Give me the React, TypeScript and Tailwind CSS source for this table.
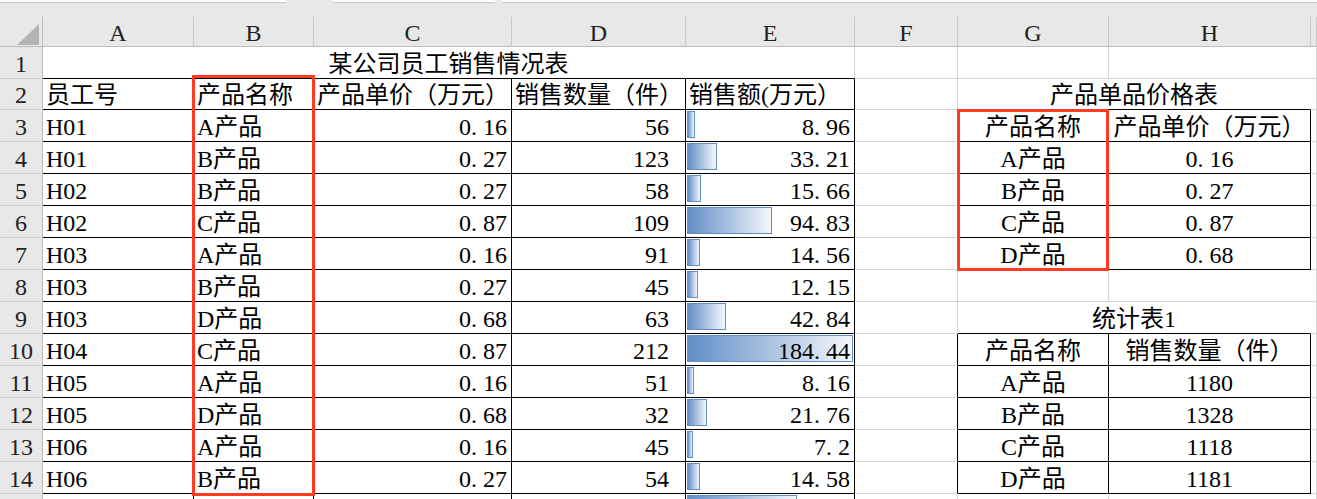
import type { ReactNode } from 'react'

type Edge = 'g' | 'k' | 'n'
type Align = 'l' | 'r' | 'c' | 'd'

const BR: Record<Edge, string> = {
  g: 'border-r-[#d4d4d4]',
  k: 'border-r-black',
  n: 'border-r-transparent',
}
const BB: Record<Edge, string> = {
  g: 'border-b-[#d4d4d4]',
  k: 'border-b-black',
  n: 'border-b-transparent',
}
const JUST: Record<Align, string> = {
  l: 'justify-start pl-[3px]',
  r: 'justify-end pr-[4px]',
  d: 'justify-end pr-[16px]',
  c: 'justify-center',
}

// column widths incl. the 1px right edge: A..H, then the sliver of I
const W = {
  A: 'w-[151px]',
  B: 'w-[120px]',
  C: 'w-[198px]',
  D: 'w-[174px]',
  E: 'w-[169px]',
  F: 'w-[103px]',
  G: 'w-[151px]',
  H: 'w-[202px]',
  GH: 'w-[353px]',
  AE: 'w-[812px]',
  I: 'w-[6px]',
}

const sales = [
  { id: 'H01', p: 'A产品', price: '0.16', qty: 56, total: '8.96' },
  { id: 'H01', p: 'B产品', price: '0.27', qty: 123, total: '33.21' },
  { id: 'H02', p: 'B产品', price: '0.27', qty: 58, total: '15.66' },
  { id: 'H02', p: 'C产品', price: '0.87', qty: 109, total: '94.83' },
  { id: 'H03', p: 'A产品', price: '0.16', qty: 91, total: '14.56' },
  { id: 'H03', p: 'B产品', price: '0.27', qty: 45, total: '12.15' },
  { id: 'H03', p: 'D产品', price: '0.68', qty: 63, total: '42.84' },
  { id: 'H04', p: 'C产品', price: '0.87', qty: 212, total: '184.44' },
  { id: 'H05', p: 'A产品', price: '0.16', qty: 51, total: '8.16' },
  { id: 'H05', p: 'D产品', price: '0.68', qty: 32, total: '21.76' },
  { id: 'H06', p: 'A产品', price: '0.16', qty: 45, total: '7.2' },
  { id: 'H06', p: 'B产品', price: '0.27', qty: 54, total: '14.58' },
]

// right hand side, keyed by sheet row
const side: Record<number, [string, ReactNode] | string> = {
  2: '产品单品价格表',
  3: ['产品名称', '产品单价（万元）'],
  4: ['A产品', <Num v="0.16" />],
  5: ['B产品', <Num v="0.27" />],
  6: ['C产品', <Num v="0.87" />],
  7: ['D产品', <Num v="0.68" />],
  9: '统计表1',
  10: ['产品名称', '销售数量（件）'],
  11: ['A产品', '1180'],
  12: ['B产品', '1328'],
  13: ['C产品', '1118'],
  14: ['D产品', '1181'],
}

const MAX = 184.44
const BAR_MAX = 166

function Num({ v }: { v: string }) {
  const [a, b] = v.split('.')
  return (
    <span>
      {a}
      {b !== undefined && (
        <>
          <span className="inline-block w-[12px]">.</span>
          {b}
        </>
      )}
    </span>
  )
}

function Cell({
  w,
  r = 'g',
  b = 'g',
  a = 'l',
  bar,
  children,
}: {
  w: string
  r?: Edge
  b?: Edge
  a?: Align
  bar?: number
  children?: ReactNode
}) {
  return (
    <div
      className={`relative flex shrink-0 items-end border-r border-b pb-[1px] leading-[26px] ${w} ${BR[r]} ${BB[b]} ${JUST[a]}`}
    >
      {bar !== undefined && (
        <div
          className="absolute left-[1px] top-[1px] h-[27px] border border-[#638ec6] bg-linear-to-r from-[#638ec6] to-[#f4f7fb]"
          style={{ width: Math.round((bar / MAX) * BAR_MAX) }}
        />
      )}
      <span className="relative whitespace-nowrap">{children}</span>
    </div>
  )
}

function RowHead({ n }: { n?: number }) {
  return (
    <div className="flex w-[43px] shrink-0 items-end justify-center border-r border-b border-r-[#bdbdbd] border-b-[#d0d0d0] bg-[#e8e8e8] pb-[1px] leading-[26px] text-[#222]">
      {n}
    </div>
  )
}

function Side({ row }: { row: number }) {
  const s = side[row]
  const inTable = Array.isArray(s)
  const f = <Cell w={W.F} r={inTable ? 'k' : 'g'} />
  if (typeof s === 'string') {
    return (
      <>
        {f}
        <Cell w={W.GH} r="n" b="k" a="c">
          {s}
        </Cell>
      </>
    )
  }
  if (Array.isArray(s)) {
    return (
      <>
        {f}
        <Cell w={W.G} r="k" b="k" a="c">
          {s[0]}
        </Cell>
        <Cell w={W.H} r="k" b="k" a="c">
          {s[1]}
        </Cell>
      </>
    )
  }
  return (
    <>
      {f}
      <Cell w={W.G} />
      <Cell w={W.H} r="n" />
    </>
  )
}

export default function App() {
  return (
    <div className="relative h-[499px] w-[1317px] overflow-hidden bg-white font-['Liberation_Serif','Noto_Sans_CJK_SC',serif] text-[24px] text-black">
      {/* formula bar remnant */}
      <div className="flex h-[17px] bg-[#e8e8e8]">
        <div className="h-[3px] w-[286px] border-b border-[#c8c8c8] bg-white" />
        <div className="w-[47px]" />
        <div className="h-[3px] w-[162px] border-b border-[#c8c8c8] bg-white" />
        <div className="w-[7px]" />
        <div className="h-[3px] flex-1 border-b border-[#c8c8c8] bg-white" />
      </div>

      {/* column letters */}
      <div className="flex h-[30px] bg-[#e8e8e8] text-[#222]">
        <div className="flex w-[43px] shrink-0 items-end justify-end border-r border-b border-[#bdbdbd] pr-[3px] pb-[1px]">
          <svg width="22" height="21" viewBox="0 0 22 21">
            <polygon points="22,0 22,21 0,21" fill="#b4b4b4" />
          </svg>
        </div>
        {(['A', 'B', 'C', 'D', 'E', 'F', 'G', 'H'] as const).map((c) => (
          <div
            key={c}
            className={`flex shrink-0 items-end justify-center border-r border-b border-r-[#c8c8c8] border-b-[#bdbdbd] leading-[26px] ${W[c]}`}
          >
            {c}
          </div>
        ))}
        <div className="w-[6px] shrink-0 border-r border-b border-r-[#c8c8c8] border-b-[#bdbdbd]" />
        <div className="flex-1 border-b border-[#bdbdbd]" />
      </div>

      {/* row 1 */}
      <div className="flex h-[32px]">
        <RowHead n={1} />
        <Cell w={W.AE} b="k" a="c">
          某公司员工销售情况表
        </Cell>
        <Side row={1} />
        <Cell w={W.I} />
      </div>

      {/* row 2 */}
      <div className="flex h-[31px]">
        <RowHead n={2} />
        <Cell w={W.A} r="k" b="k">
          员工号
        </Cell>
        <Cell w={W.B} r="k" b="k">
          产品名称
        </Cell>
        <Cell w={W.C} r="k" b="k">
          产品单价（万元）
        </Cell>
        <Cell w={W.D} r="k" b="k">
          销售数量（件）
        </Cell>
        <Cell w={W.E} r="k" b="k">
          销售额(万元）
        </Cell>
        <Side row={2} />
        <Cell w={W.I} />
      </div>

      {sales.map((s, i) => {
        const row = i + 3
        return (
          <div key={row} className="flex h-[32px]">
            <RowHead n={row} />
            <Cell w={W.A} r="k" b="k">
              {s.id}
            </Cell>
            <Cell w={W.B} r="k" b="k">
              {s.p}
            </Cell>
            <Cell w={W.C} r="k" b="k" a="r">
              <Num v={s.price} />
            </Cell>
            <Cell w={W.D} r="k" b="k" a="d">
              {s.qty}
            </Cell>
            <Cell w={W.E} r="k" b="k" a="r" bar={parseFloat(s.total)}>
              <Num v={s.total} />
            </Cell>
            <Side row={row} />
            <Cell w={W.I} />
          </div>
        )
      })}

      {/* row 15, cut off by the window edge */}
      <div className="flex h-[32px]">
        <RowHead />
        <Cell w={W.A} r="k" b="k" />
        <Cell w={W.B} r="k" b="k" />
        <Cell w={W.C} r="k" b="k" />
        <Cell w={W.D} r="k" b="k" />
        <Cell w={W.E} r="k" b="k" bar={122.2} />
        <Side row={15} />
        <Cell w={W.I} />
      </div>

      {/* red highlight boxes */}
      <div className="absolute left-[192px] top-[75px] h-[421px] w-[123px] border-[3px] border-[#ff3b21]" />
      <div className="absolute left-[957px] top-[109px] h-[162px] w-[152px] border-[3px] border-[#ff3b21]" />
    </div>
  )
}
